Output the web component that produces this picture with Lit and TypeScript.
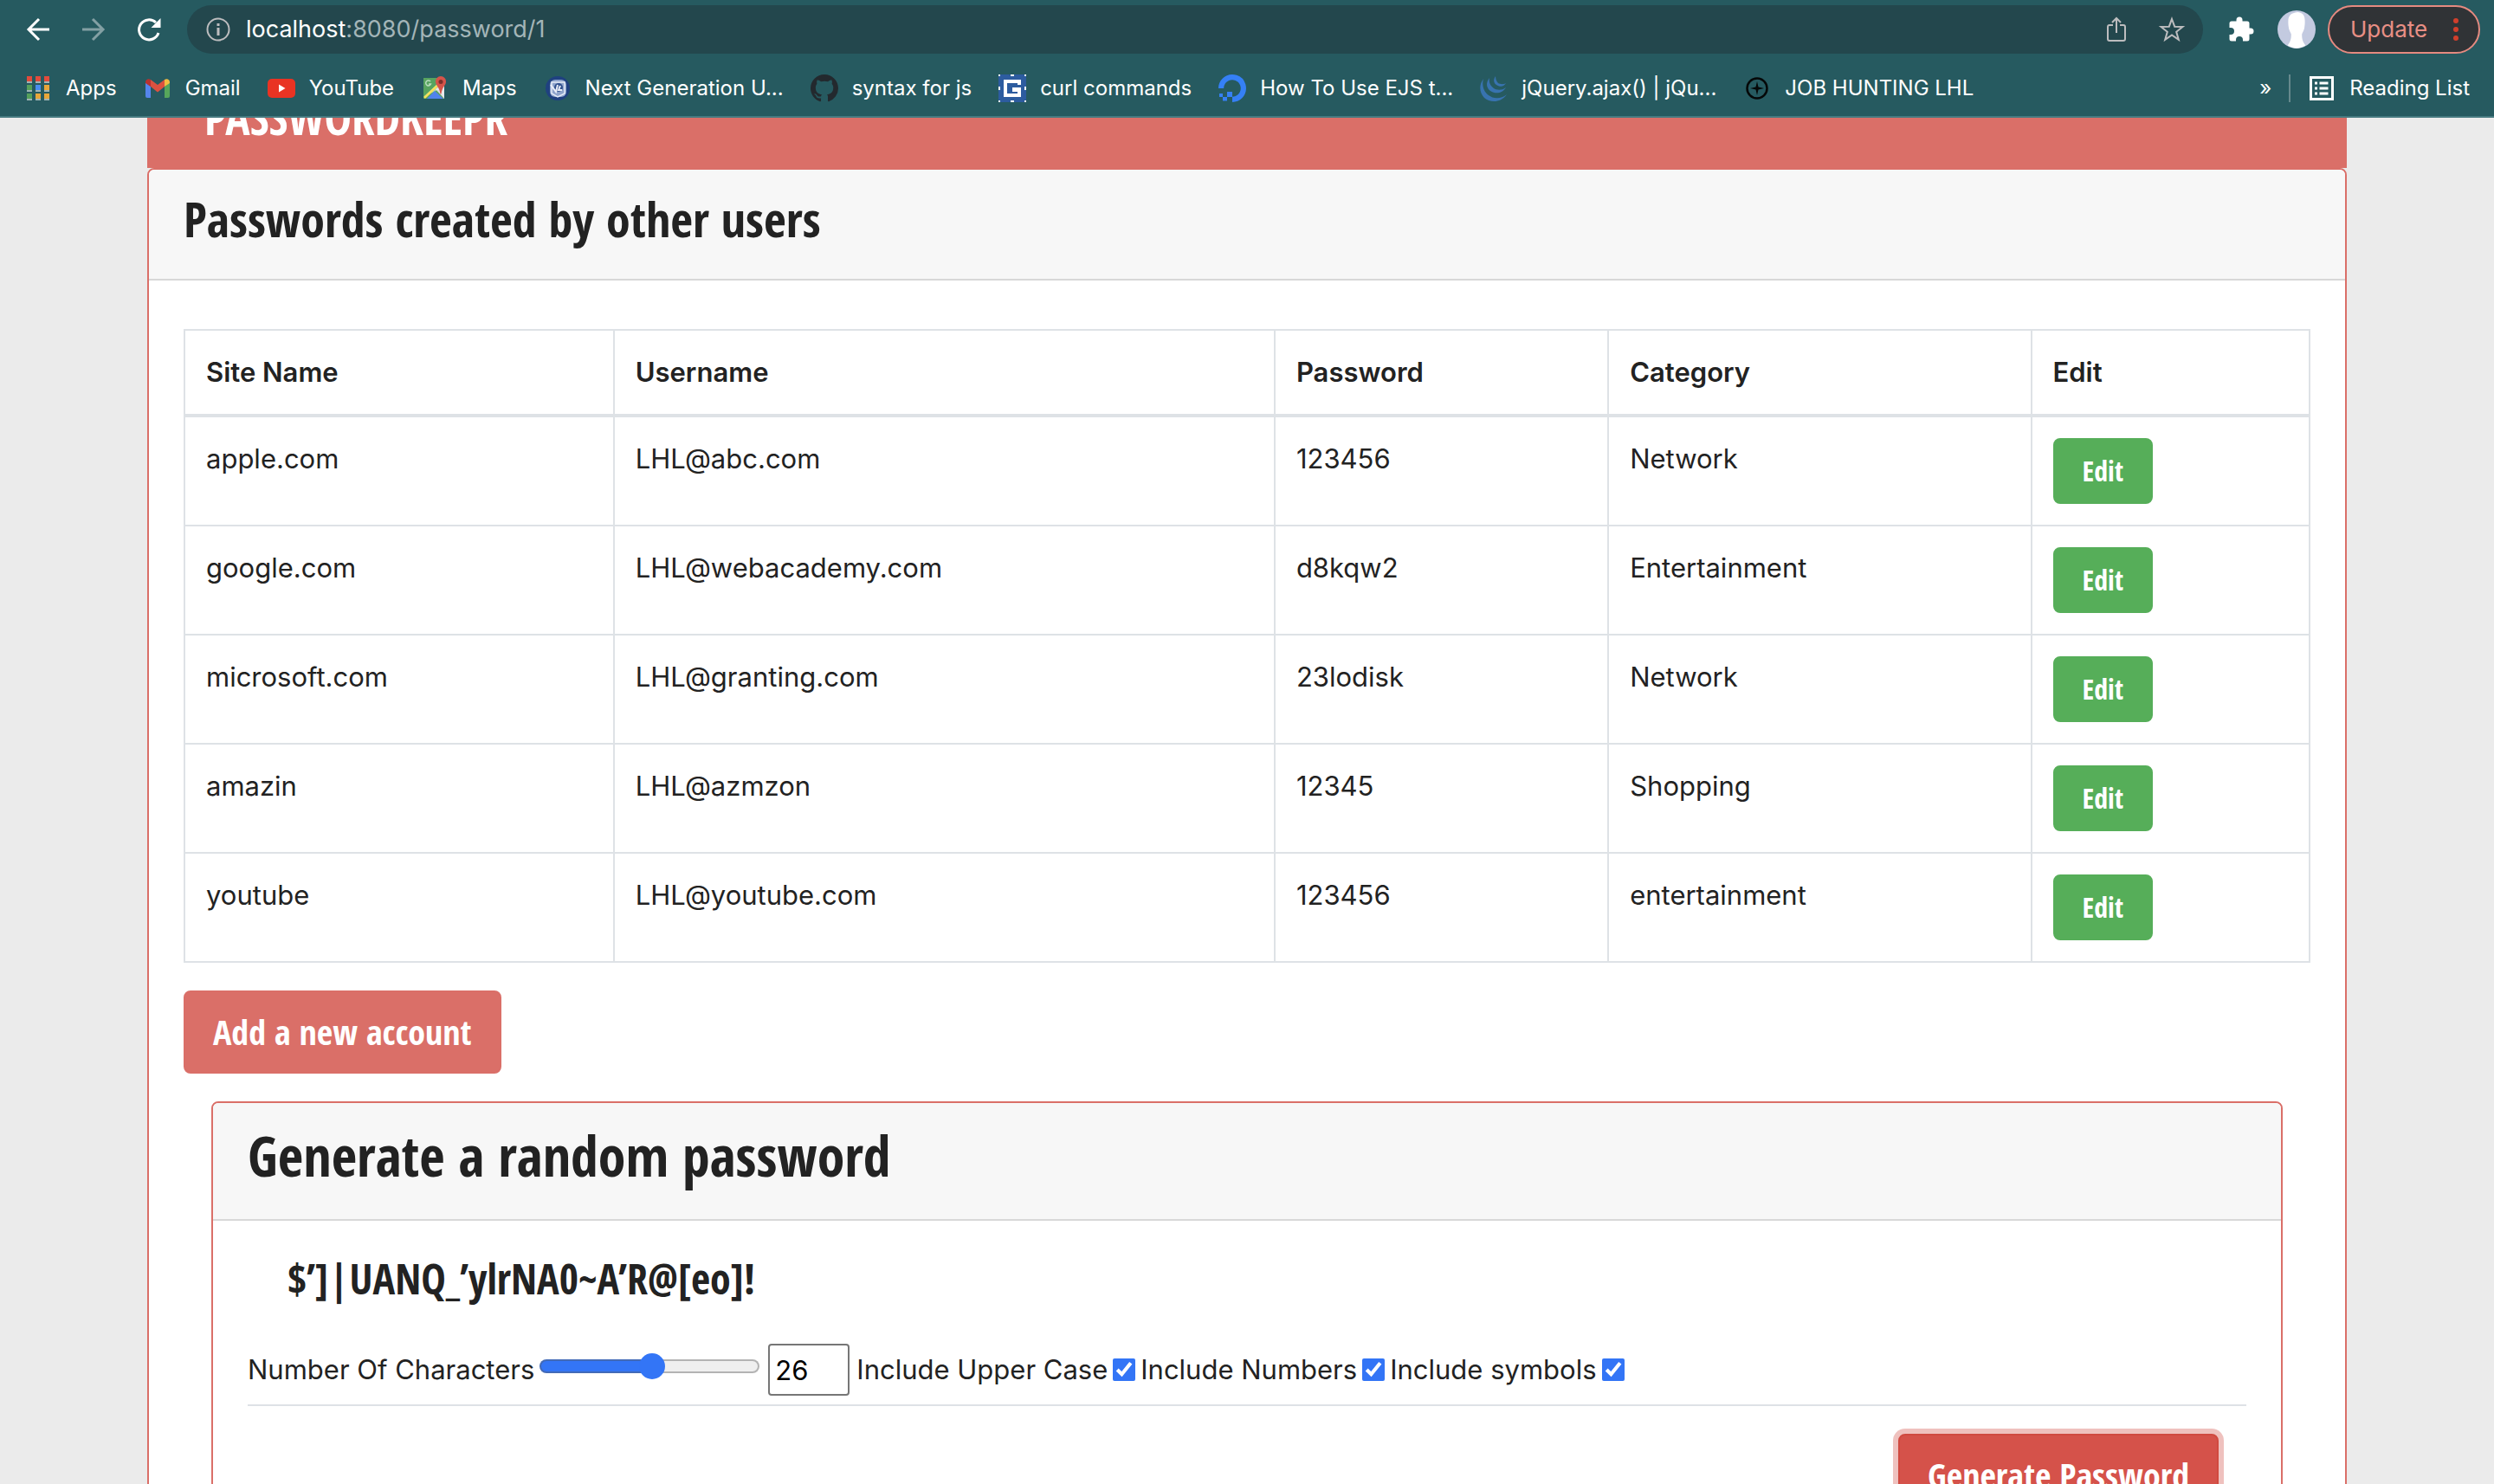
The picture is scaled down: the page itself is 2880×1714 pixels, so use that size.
import { LitElement, html, css, svg } from "lit";
import { customElement, state } from "lit/decorators.js";

interface Account {
  site: string;
  username: string;
  password: string;
  category: string;
}

const icon = (body: unknown, size = 32) =>
  html`<svg class="icon" width=${size} height=${size} viewBox="0 0 32 32" aria-hidden="true">${body}</svg>`;

const apps = icon(svg`
  <path fill="#9fb3b5" d="M3 8h6v2H3zM13 8h6v2h-6zM23 8h6v2h-6zM3 18h6v2H3zM13 18h6v2h-6zM23 18h6v2h-6zM3 28h6v2H3zM13 28h6v2h-6zM23 28h6v2h-6z"/>
  <path fill="#e24b3c" d="M3 2h6v6H3zM13 2h6v6h-6zM23 2h6v6h-6z"/>
  <path fill="#56a05a" d="M3 12h6v6H3zM3 22h6v6H3z"/>
  <path fill="#4a8df0" d="M13 12h6v6h-6z"/>
  <path fill="#e8a63a" d="M23 12h6v6h-6zM13 22h6v6h-6zM23 22h6v6h-6z"/>`);
const gmail = icon(svg`
  <path fill="#5585ec" d="M2 9l6 5v13H4a2 2 0 0 1-2-2z"/>
  <path fill="#56a65b" d="M30 9l-6 5v13h4a2 2 0 0 0 2-2z"/>
  <path fill="#b83230" d="M2 9c0-4 4-4.600 6-3v8l-6-4z"/>
  <path fill="#f2bd42" d="M30 9c0-4-4-4.600-6-3v8l6-4z"/>
  <path fill="#dc5140" d="M8 6l8 6 8-6v8l-8 6.500-8-6.500z"/>`);
const youtube = icon(svg`
  <rect x="0" y="5" width="32" height="22" rx="5" fill="#e93323"/>
  <path fill="#fff" d="M13 11.500l7.500 4.500-7.500 4.500z"/>`);
const maps = icon(svg`
  <path fill="#57a35f" d="M3 4h24v24H3z"/>
  <path fill="#d9dce0" d="M17 17l10-6v17z"/>
  <path fill="#fff" d="M3 26L22 8l5 3v8l-6-2z" opacity=".5"/>
  <path stroke="#f7e05a" stroke-width="2.500" d="M4 27L19 13"/>
  <path fill="#5183ec" d="M7 28l9-9 10 9z"/>
  <path fill="#e8eaec" d="M19 16l8 12V15z"/>
  <path fill="#d5544a" d="M23 2a6 6 0 0 1 6 6.500c0 4-4.500 6-5.500 14h-1C21.500 14.500 17 12.500 17 8.500A6 6 0 0 1 23 2z"/>
  <circle cx="23" cy="8.500" r="2.500" fill="#7d2f2b"/>
  <path fill="none" stroke="#b9dcbd" stroke-width="1.500" d="M11 8a3 3 0 1 0 .5 3H9"/>`);
const nextGen = icon(svg`
  <circle cx="16" cy="16" r="14" fill="#1f4180"/>
  <rect x="7" y="6" width="19" height="20" rx="6" fill="#8fa4cb"/>
  <path fill="none" stroke="#e6ecf7" stroke-width="1.500" d="M9 9h15v13l-8 4-7-4z"/>
  <circle cx="17" cy="15" r="5" fill="#31518e"/>
  <path fill="none" stroke="#e9eef8" stroke-width="2" d="M8 12l6 8 2-8M19 13l-2 5h4"/>`);
const github = icon(svg`
  <path fill="#23292e" fill-rule="evenodd" transform="scale(2)" d="M8 0C3.580 0 0 3.580 0 8c0 3.540 2.290 6.530 5.470 7.590.4.070.55-.17.55-.38 0-.19-.01-.82-.01-1.490-2.010.37-2.530-.49-2.690-.94-.09-.23-.48-.94-.82-1.130-.28-.15-.68-.52-.01-.53.63-.01 1.080.58 1.230.82.72 1.210 1.870.87 2.330.66.07-.52.28-.87.51-1.070-1.780-.2-3.640-.89-3.640-3.950 0-.87.31-1.590.82-2.150-.08-.2-.36-1.020.08-2.120 0 0 .67-.21 2.200.82.64-.18 1.320-.27 2-.27s1.360.09 2 .27c1.530-1.040 2.200-.82 2.200-.82.44 1.100.16 1.920.08 2.120.51.56.82 1.270.82 2.150 0 3.070-1.870 3.750-3.650 3.950.29.25.54.73.54 1.480 0 1.070-.01 1.930-.01 2.200 0 .21.15.46.55.38A8.010 8.010 0 0 0 16 8c0-4.420-3.580-8-8-8z"/>`);
const curl = icon(svg`
  <path fill="#2d5c9f" d="M0 0h32v32H0z"/>
  <path fill="#fff" d="M0 0h2v2H0zM14 0h4v2h-4zM30 0h2v2h-2zM0 14h2v4H0zM30 14h2v4h-2zM0 30h2v2H0zM14 30h4v2h-4zM30 30h2v2h-2z"/>
  <path fill="#fff" d="M6 6h20v6h-4v-2H10v12h12v-2h-6v-5h10v11H6z"/>`);
const ocean = icon(svg`
  <path fill="#3580f6" d="M16 32v-6.200c6.600 0 11.600-6.500 9.100-13.400a9.300 9.300 0 0 0-5.500-5.500C12.700 4.400 6.200 9.400 6.200 16H0C0 5.600 10.100-2.600 21 .800a15.600 15.600 0 0 1 10.200 10.200C34.600 21.900 26.500 32 16 32z"/>
  <path fill="#3580f6" d="M10 20h6v6h-6zM5 26h5v4.500H5zM1 22h4v4H1z"/>`);
const jquery = icon(svg`
  <path fill="#3873b0" d="M4 5C-2 13 0 22 5 27c7 6 19 6 26-4-7 6-16 5-21 1C4 20 2 12 4 5z"/>
  <path fill="#3873b0" d="M11 4C6 10 8 16 12 19c6 4 14 3 18-4-5 4-11 3-14 1C12 13 10 9 11 4z"/>
  <path fill="#3873b0" d="M18 2c-3 4-2 8 1 10 4 3 9 2 11-2-3 2-7 1-9 0-2-2-3-5-3-8z"/>`);
const compass = icon(svg`
  <circle cx="16" cy="16" r="11.500" fill="none" stroke="#050808" stroke-width="2.500"/>
  <path fill="#050808" d="M16 8l1.500 6.500 6.500 1.500-6.500 1.500L16 24l-1.500-6.500L8 16l6.500-1.500z"/>`);
const back = icon(svg`<path fill="none" stroke="currentColor" stroke-width="3" d="M29 16H5M17 4L5 16l12 12"/>`);
const forward = icon(svg`<path fill="none" stroke="currentColor" stroke-width="3" d="M3 16h24M15 4l12 12-12 12"/>`);
const reload = icon(svg`
  <path fill="none" stroke="currentColor" stroke-width="3" d="M27 20a11.500 11.500 0 1 1-3-12"/>
  <path fill="currentColor" d="M29.500 3v11h-11z"/>`);
const info = icon(svg`
  <circle cx="16" cy="16" r="12.500" fill="none" stroke="currentColor" stroke-width="2"/>
  <path fill="currentColor" d="M14.500 9h3v3h-3zM14.500 14h3v9h-3z"/>`);
const share = icon(svg`
  <path fill="none" stroke="currentColor" stroke-width="2" d="M12 11H8a2 2 0 0 0-2 2v14a2 2 0 0 0 2 2h16a2 2 0 0 0 2-2V13a2 2 0 0 0-2-2h-4M16 20V4M11 8l5-5 5 5"/>`);
const star = icon(svg`
  <path fill="none" stroke="currentColor" stroke-width="2" d="M16 4l3.200 8.700 9.300.300-7.300 5.800 2.600 9L16 22.500l-7.800 5.300 2.600-9L3.500 13l9.300-.300z"/>`);
const puzzle = icon(svg`
  <path fill="#fff" d="M27 14.500h-1.500V9a2.500 2.500 0 0 0-2.500-2.500h-5.500V5a3.500 3.500 0 0 0-7 0v1.500H5A2.500 2.500 0 0 0 2.500 9v5H4a4 4 0 0 1 0 8H2.500v5A2.500 2.500 0 0 0 5 29.500h5V28a4 4 0 0 1 8 0v1.500h5a2.500 2.500 0 0 0 2.500-2.500v-5.500H27a3.500 3.500 0 0 0 0-7z"/>`);
const avatar = icon(
  svg`
  <circle cx="16" cy="16" r="16" fill="#c3cae0"/>
  <path fill="#fff" d="M17 1.500c5 .5 6 4 6 7.500 0 2 0 3-.5 6-.5 2-1.500 3.500-2 5 0 4 .5 6 3 9.500-5 3-10 3-15 0 2.500-3.500 3-5.500 3-9.500-.5-1.500-1.500-3-2-5C9 12 9 11 9 9c0-4 2-7 8-7.500z"/>`,
  44,
);
const list = icon(svg`
  <rect x="3.500" y="3.500" width="25" height="25" fill="none" stroke="#fff" stroke-width="3"/>
  <path fill="#fff" d="M8 8.500h3v3H8zM13.500 8.500h10v3h-10zM8 14.500h3v3H8zM13.500 14.500h10v3h-10zM8 20.500h3v3H8zM13.500 20.500h10v3h-10z"/>`);

const bookmarks: Array<[unknown, string]> = [
  [apps, "Apps"],
  [gmail, "Gmail"],
  [youtube, "YouTube"],
  [maps, "Maps"],
  [nextGen, "Next Generation U..."],
  [github, "syntax for js"],
  [curl, "curl commands"],
  [ocean, "How To Use EJS t..."],
  [jquery, "jQuery.ajax() | jQu..."],
  [compass, "JOB HUNTING LHL"],
];

const accounts: Account[] = [
  { site: "apple.com", username: "LHL@abc.com", password: "123456", category: "Network" },
  { site: "google.com", username: "LHL@webacademy.com", password: "d8kqw2", category: "Entertainment" },
  { site: "microsoft.com", username: "LHL@granting.com", password: "23lodisk", category: "Network" },
  { site: "amazin", username: "LHL@azmzon", password: "12345", category: "Shopping" },
  { site: "youtube", username: "LHL@youtube.com", password: "123456", category: "entertainment" },
];

@customElement("browser-bar")
export class BrowserBar extends LitElement {
  static styles = css`
    :host {
      display: block;
      flex: none;
      background: #265a60;
      border-bottom: 2px solid #467a80;
      color: #fff;
      font-family: Inter, "Liberation Sans", sans-serif;
      font-size: 24px;
      line-height: 32px;
    }
    .icon {
      display: block;
      flex: none;
    }
    button {
      display: block;
      margin: 0;
      padding: 0;
      border: 0;
      background: none;
      color: inherit;
      font: inherit;
    }
    .tools {
      display: flex;
      align-items: center;
      padding: 6px 16px;
    }
    .nav {
      display: flex;
      gap: 32px;
      padding: 0 28px 0 12px;
    }
    .nav .dim {
      color: #83a0a4;
    }
    .address {
      display: flex;
      flex: 1;
      align-items: center;
      gap: 16px;
      height: 56px;
      padding: 0 20px;
      border-radius: 28px;
      background: #23474d;
      color: #bdbdbf;
    }
    .url {
      flex: 1;
      font-size: 27px;
      line-height: 34px;
      color: #a3b5b8;
    }
    .host {
      color: #fff;
    }
    .actions {
      display: flex;
      gap: 32px;
    }
    .side {
      display: flex;
      align-items: center;
      gap: 26px;
      padding: 0 14px 0 28px;
    }
    .update {
      display: flex;
      align-items: center;
      justify-content: space-between;
      box-sizing: border-box;
      width: 176px;
      height: 56px;
      padding: 0 23px 0 24px;
      border: 2px solid #e58a80;
      border-radius: 28px;
      background: #303336;
      color: #e88f85;
      font-size: 26px;
    }
    .dots {
      display: grid;
      gap: 4px;
    }
    .dot {
      width: 6px;
      height: 6px;
      border-radius: 3px;
      background: #d13f2c;
    }
    .marks {
      display: flex;
      align-items: center;
      gap: 31px;
      height: 68px;
      margin-bottom: -2px;
      padding: 0 28px;
    }
    .mark {
      display: flex;
      align-items: center;
      gap: 16px;
      color: #fff;
      text-decoration: none;
      white-space: nowrap;
    }
    .tail {
      display: flex;
      align-items: center;
      gap: 20px;
      margin-left: auto;
    }
    .rule {
      width: 2px;
      height: 32px;
      background: #66898d;
    }
  `;

  render() {
    return html`
      <div class="tools">
        <div class="nav">
          <button aria-label="Back">${back}</button>
          <button class="dim" aria-label="Forward">${forward}</button>
          <button aria-label="Reload">${reload}</button>
        </div>
        <div class="address">
          ${info}
          <div class="url"><span class="host">localhost</span>:8080/password/1</div>
          <div class="actions">
            <button aria-label="Share">${share}</button>
            <button aria-label="Bookmark">${star}</button>
          </div>
        </div>
        <div class="side">
          <button aria-label="Extensions">${puzzle}</button>
          <button aria-label="Profile">${avatar}</button>
        </div>
        <button class="update">
          Update
          <span class="dots"><span class="dot"></span><span class="dot"></span><span class="dot"></span></span>
        </button>
      </div>
      <nav class="marks">
        ${bookmarks.map(([glyph, name]) => html`<a class="mark" href="#">${glyph}<span>${name}</span></a>`)}
        <div class="tail">
          <button aria-label="More bookmarks">»</button>
          <span class="rule"></span>
          <a class="mark" href="#">${list}<span>Reading List</span></a>
        </div>
      </nav>
    `;
  }
}

@customElement("app-root")
export class AppRoot extends LitElement {
  static styles = css`
    :host {
      --display: "Open Sans Condensed", "Roboto Condensed", sans-serif;
      --salmon: #da6f68;
      --line: #dee2e6;
      display: flex;
      flex-direction: column;
      height: 100vh;
      overflow: hidden;
      background: #ebebeb;
      color: #222;
      font-family: Inter, "Liberation Sans", sans-serif;
      font-size: 31px;
      line-height: 48px;
    }
    .page {
      flex: 1;
      min-height: 0;
      overflow: hidden;
      padding: 0 170px;
    }
    .brand {
      display: flex;
      align-items: flex-end;
      height: 58px;
      overflow: hidden;
      padding: 0 66px;
      background: var(--salmon);
      color: #fff;
      font: 700 53px/60px var(--display);
    }
    .brand-name {
      margin-bottom: 28px;
      color: inherit;
      text-decoration: none;
    }
    .card {
      border: 2px solid var(--salmon);
      border-radius: 8px;
      background: #fff;
    }
    .head {
      padding: 24px 40px 38px;
      border-bottom: 2px solid #d8d8d8;
      border-radius: 6px 6px 0 0;
      background: #f7f7f7;
    }
    .title {
      margin: 0;
      font: 700 56px/64px var(--display);
    }
    .body {
      padding: 56px 40px;
    }
    .accounts {
      width: 100%;
      margin-bottom: 32px;
      border-collapse: collapse;
      table-layout: fixed;
    }
    .accounts th,
    .accounts td {
      box-sizing: border-box;
      padding: 24px;
      border: 2px solid var(--line);
      text-align: left;
      vertical-align: top;
    }
    .accounts th {
      border-bottom-width: 4px;
      font-weight: 600;
    }
    .site {
      width: 20.2%;
    }
    .username {
      width: 31.1%;
    }
    .password {
      width: 15.7%;
    }
    .category {
      width: 19.9%;
    }
    .btn {
      display: block;
      margin: 0;
      padding: 14px 32px;
      border: 2px solid transparent;
      border-radius: 8px;
      color: #fff;
      font: 700 32px/44px var(--display);
    }
    .edit {
      border-color: #56ae59;
      background: #56ae59;
    }
    .large {
      font-size: 40px;
      line-height: 64px;
    }
    .add {
      border-color: var(--salmon);
      background: var(--salmon);
    }
    .generator {
      margin: 32px 32px 0;
    }
    .generator .head {
      padding-bottom: 36px;
    }
    .generator .title {
      font-size: 64px;
      line-height: 74px;
    }
    .generator .body {
      padding-top: 38px;
    }
    .result {
      display: block;
      margin-bottom: 46px;
      padding: 0 46px;
      font: 700 48px/58px var(--display);
    }
    .options {
      display: flex;
      align-items: center;
      gap: 6px;
      padding-bottom: 10px;
      border-bottom: 2px solid var(--line);
    }
    .amount {
      width: 254px;
      height: 30px;
      margin: 0 4px 8px 0;
      appearance: none;
      background: none;
    }
    .amount::-webkit-slider-runnable-track {
      box-sizing: border-box;
      height: 16px;
      border: 2px solid rgba(90, 90, 90, 0.4);
      border-radius: 8px;
      background: linear-gradient(90deg, #3375f6 50%, #efefef 50%) border-box;
    }
    .amount::-webkit-slider-thumb {
      width: 30px;
      height: 30px;
      margin-top: -9px;
      border-radius: 15px;
      appearance: none;
      background: #3375f6;
    }
    .count {
      box-sizing: border-box;
      width: 94px;
      height: 60px;
      margin-right: 2px;
      padding: 2px 6px;
      border: 2px solid #767676;
      border-radius: 4px;
      background: #fff;
      color: #000;
      font: inherit;
      appearance: textfield;
    }
    .count::-webkit-inner-spin-button {
      display: none;
    }
    .check {
      width: 26px;
      height: 26px;
      margin: 0;
      accent-color: #3375f6;
    }
    .generate {
      margin: 32px 32px 0 auto;
      border-color: #d04a40;
      background: #d5524a;
      box-shadow: 0 0 0 6px #efc1be;
    }
  `;

  @state() private length = 26;

  private setLength(event: Event) {
    this.length = Number((event.target as HTMLInputElement).value);
  }

  render() {
    return html`
      <browser-bar></browser-bar>
      <main class="page">
        <header class="brand"><a class="brand-name" href="#">PASSWORDKEEPR</a></header>
        <section class="card">
          <div class="head"><h2 class="title">Passwords created by other users</h2></div>
          <div class="body">
            <table class="accounts">
              <thead>
                <tr>
                  <th class="site">Site Name</th>
                  <th class="username">Username</th>
                  <th class="password">Password</th>
                  <th class="category">Category</th>
                  <th>Edit</th>
                </tr>
              </thead>
              <tbody>
                ${accounts.map(
                  (a) => html`<tr>
                    <td>${a.site}</td>
                    <td>${a.username}</td>
                    <td>${a.password}</td>
                    <td>${a.category}</td>
                    <td><button class="btn edit">Edit</button></td>
                  </tr>`,
                )}
              </tbody>
            </table>
            <button class="btn large add">Add a new account</button>
            <section class="card generator">
              <div class="head"><h1 class="title">Generate a random password</h1></div>
              <div class="body">
                <output class="result">$’]|UANQ_’ylrNA0~A’R@[eo]!</output>
                <div class="options">
                  <label for="amount">Number Of Characters</label>
                  <input class="amount" id="amount" type="range" min="1" max="50" .value=${String(this.length)} @input=${this.setLength} />
                  <input class="count" type="number" aria-label="Number of characters" min="1" max="50" .value=${String(this.length)} @input=${this.setLength} />
                  <label for="upper">Include Upper Case</label>
                  <input class="check" id="upper" type="checkbox" checked />
                  <label for="numbers">Include Numbers</label>
                  <input class="check" id="numbers" type="checkbox" checked />
                  <label for="symbols">Include symbols</label>
                  <input class="check" id="symbols" type="checkbox" checked />
                </div>
                <button class="btn large generate">Generate Password</button>
              </div>
            </section>
          </div>
        </section>
      </main>
    `;
  }
}
